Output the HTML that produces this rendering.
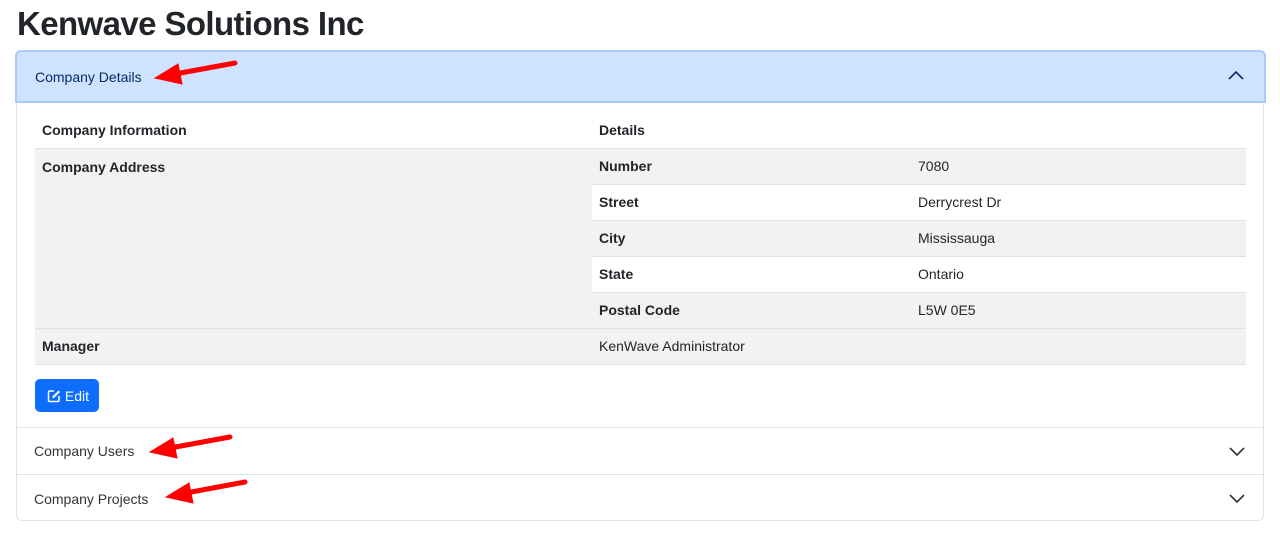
<!DOCTYPE html>
<html><head><style>
*{box-sizing:border-box;margin:0;padding:0}
body{width:1280px;height:539px;background:#fff;font-family:"Liberation Sans",sans-serif;color:#212529;position:relative;overflow:hidden}
h1{position:absolute;left:17px;top:5px;font-size:33px;font-weight:600;letter-spacing:-0.6px;color:#212529}
.card{position:absolute;left:16px;top:51px;width:1248px;height:470px;border:1px solid #dee2e6;border-radius:6px}
.hdr{position:absolute;left:-2px;top:-2px;width:1251px;height:53px;background:#cfe2ff;border:2px solid #a9cbfc;border-radius:6px 6px 0 0;color:#052c65;font-size:14px;padding:17px 0 0 18px}
.acc{position:absolute;left:0;width:1246px;border-top:1px solid #dee2e6;font-size:14px;color:#333;padding-left:17px}
.chev{position:absolute;right:18px}
table{position:absolute;left:18px;top:60px;width:1211px;border-collapse:collapse;font-size:14px}
td{height:36px;padding:0 7px;border-bottom:1px solid #dee2e6;vertical-align:middle}
td.top{vertical-align:top;padding-top:10px}
.g{background:#f2f2f2}
b{font-weight:700}
.btn{position:absolute;left:18px;top:327px;width:64px;height:33px;background:#0d6efd;border-radius:5px;color:#fff;font-size:14px;padding:9px 0 0 12px}
</style></head><body>
<h1>Kenwave Solutions Inc</h1>
<div class="card">
<div class="hdr">Company Details
<svg class="chev" style="top:18px;right:20px" width="16" height="12" viewBox="0 0 16 12"><path d="M1 9 L8 2 L15 9" fill="none" stroke="#052c65" stroke-width="1.6"/></svg></div>
<table>
<tr><td style="width:557px"><b>Company Information</b></td><td style="width:319px"><b>Details</b></td><td></td></tr>
<tr><td class="g top" rowspan="5"><b>Company Address</b></td><td class="g"><b>Number</b></td><td class="g">7080</td></tr>
<tr><td><b>Street</b></td><td>Derrycrest Dr</td></tr>
<tr><td class="g"><b>City</b></td><td class="g">Mississauga</td></tr>
<tr><td><b>State</b></td><td>Ontario</td></tr>
<tr><td class="g"><b>Postal Code</b></td><td class="g">L5W 0E5</td></tr>
<tr><td class="g"><b>Manager</b></td><td class="g" colspan="2">KenWave Administrator</td></tr>
</table>
<div class="btn"><svg width="14" height="14" viewBox="0 0 14 14" style="vertical-align:-2px"><path d="M7 2H2.5A1 1 0 0 0 1.5 3v8.5a1 1 0 0 0 1 1H11a1 1 0 0 0 1-1V7" fill="none" stroke="#fff" stroke-width="1.5"/><path d="M11.5 1.5l1.5 1.5-6 6H5.5V7.5z" fill="#fff"/></svg> Edit</div>
<div class="acc" style="top:375px;height:47px;padding-top:15px">Company Users
<svg class="chev" style="top:17px" width="16" height="12" viewBox="0 0 16 12"><path d="M1 3 L8 10 L15 3" fill="none" stroke="#333" stroke-width="1.6"/></svg></div>
<div class="acc" style="top:422px;height:46px;padding-top:16px">Company Projects
<svg class="chev" style="top:17px" width="16" height="12" viewBox="0 0 16 12"><path d="M1 3 L8 10 L15 3" fill="none" stroke="#333" stroke-width="1.6"/></svg></div>
</div>
<svg width="1280" height="539" style="position:absolute;left:0;top:0">
<g fill="#f00" stroke="#f00" stroke-width="5" stroke-linecap="round">
<line x1="235" y1="63" x2="175" y2="74"/><polygon points="155,78 178,64 182,84" stroke-width="1"/>
<line x1="230" y1="437" x2="170" y2="448"/><polygon points="150,452 173,438 177,458" stroke-width="1"/>
<line x1="245" y1="482" x2="186" y2="493"/><polygon points="166,497 189,483 193,503" stroke-width="1"/>
</g></svg>
</body></html>
